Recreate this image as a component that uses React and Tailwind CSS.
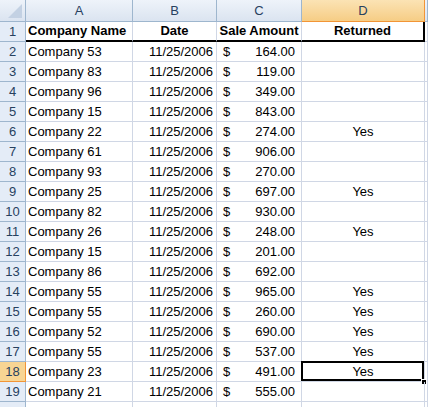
const rows = [
  ['Company 53', '164.00', ''],
  ['Company 83', '119.00', ''],
  ['Company 96', '349.00', ''],
  ['Company 15', '843.00', ''],
  ['Company 22', '274.00', 'Yes'],
  ['Company 61', '906.00', ''],
  ['Company 93', '270.00', ''],
  ['Company 25', '697.00', 'Yes'],
  ['Company 82', '930.00', ''],
  ['Company 26', '248.00', 'Yes'],
  ['Company 15', '201.00', ''],
  ['Company 86', '692.00', ''],
  ['Company 55', '965.00', 'Yes'],
  ['Company 55', '260.00', 'Yes'],
  ['Company 52', '690.00', 'Yes'],
  ['Company 55', '537.00', 'Yes'],
  ['Company 23', '491.00', 'Yes'],
  ['Company 21', '555.00', ''],
]

const cols = 'grid grid-cols-[26px_107px_84px_85px_123px_1fr]'
const cell = 'h-[20px] border-r border-b border-[#d0d7e5] flex items-end pb-[2px] leading-[15px] overflow-hidden whitespace-nowrap'
const rowHead = 'h-[20px] border-r border-b border-[#9eb6ce] bg-[#e4ecf7] flex items-end pb-[2px] leading-[15px] justify-center text-[#27415f]'

function ColHead({ label, active }) {
  return (
    <div
      className={`h-[22px] border-r border-b flex items-center justify-center text-[#27415f] ${
        active
          ? 'bg-gradient-to-b from-[#fbe3b4] to-[#f6cd85] border-[#f29536]'
          : 'bg-gradient-to-b from-[#eef3fa] to-[#dbe4f0] border-[#9eb6ce]'
      }`}
    >
      {label}
    </div>
  )
}

export default function App() {
  return (
    <div className="w-[428px] h-[407px] overflow-hidden bg-white text-[13px] text-black font-['Liberation_Sans',Arial,sans-serif]">
      <div className={cols}>
        <div className="h-[22px] border-r border-b border-[#9eb6ce] bg-gradient-to-b from-[#eef3fa] to-[#dbe4f0] relative">
          <div className="absolute right-[3px] bottom-[3px] w-0 h-0 border-l-[14px] border-l-transparent border-b-[14px] border-b-[#c3d1e3]" />
        </div>
        <ColHead label="A" />
        <ColHead label="B" />
        <ColHead label="C" />
        <ColHead label="D" active />
        <ColHead label="" />

        <div className={rowHead}>1</div>
        <div className={`${cell} font-bold pl-[2px] border-b-2 border-b-black`}>Company Name</div>
        <div className={`${cell} font-bold justify-center border-b-2 border-b-black`}>Date</div>
        <div className={`${cell} font-bold justify-center border-b-2 border-b-black`}>Sale Amount</div>
        <div className={`${cell} font-bold justify-center border-b-2 border-b-black border-r-2 border-r-black`}>Returned</div>
        <div className={cell} />

        {rows.map(([name, amount, ret], i) => {
          const n = i + 2
          const selected = n === 18
          return [
            <div
              key={`h${n}`}
              className={
                selected
                  ? 'h-[20px] border-r border-b border-[#f29536] bg-[#f8d593] flex items-end pb-[2px] leading-[15px] justify-center text-[#27415f]'
                  : rowHead
              }
            >
              {n}
            </div>,
            <div key={`a${n}`} className={`${cell} pl-[2px]`}>{name}</div>,
            <div key={`b${n}`} className={`${cell} justify-end pr-[3px]`}>11/25/2006</div>,
            <div key={`c${n}`} className={`${cell} justify-between pl-[6px] pr-[6px]`}>
              <span>$</span>
              <span>{amount}</span>
            </div>,
            <div key={`d${n}`} className={`${cell} justify-center relative overflow-visible`}>
              {ret}
              {selected && (
                <>
                  <div className="absolute -left-[1px] -top-[1px] right-[0px] bottom-[0px] border-2 border-black" />
                  <div className="absolute -right-[3px] -bottom-[4px] w-[6px] h-[6px] bg-black border border-white" />
                </>
              )}
            </div>,
            <div key={`e${n}`} className={cell} />,
          ]
        })}

        <div className="h-[20px] border-r border-b border-[#9eb6ce] bg-[#e4ecf7]" />
        <div className={cell} />
        <div className={cell} />
        <div className={cell} />
        <div className={cell} />
        <div className={cell} />
      </div>
    </div>
  )
}
